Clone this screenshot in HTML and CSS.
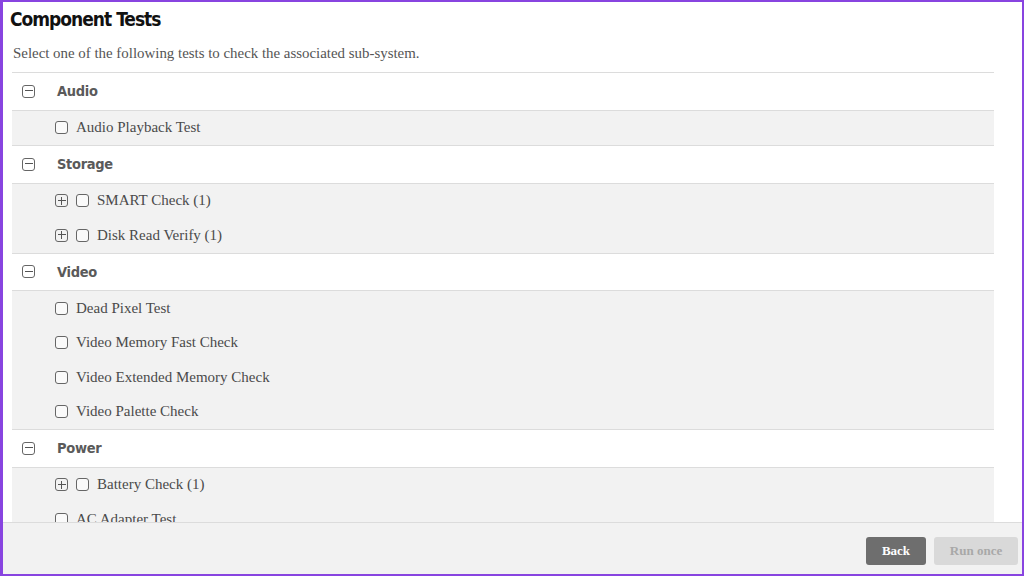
FILE: index.html
```html
<!DOCTYPE html>
<html>
<head>
<meta charset="utf-8">
<link rel="stylesheet" href="styles.css">
</head>
<body>
<div class="page">
  <div class="main">
    <h1 class="title">Component Tests</h1>
    <p class="intro">Select one of the following tests to check the associated sub-system.</p>
    <div class="list">
      <div class="cat">
        <div class="cat-head"><span class="toggle minus"></span><span class="cat-name">Audio</span></div>
        <div class="items">
          <div class="item"><span class="box"></span><span class="label">Audio Playback Test</span></div>
        </div>
      </div>
      <div class="cat">
        <div class="cat-head"><span class="toggle minus"></span><span class="cat-name">Storage</span></div>
        <div class="items">
          <div class="item"><span class="toggle plus small"></span><span class="box"></span><span class="label">SMART Check (1)</span></div>
          <div class="item"><span class="toggle plus small"></span><span class="box"></span><span class="label">Disk Read Verify (1)</span></div>
        </div>
      </div>
      <div class="cat">
        <div class="cat-head"><span class="toggle minus"></span><span class="cat-name">Video</span></div>
        <div class="items">
          <div class="item"><span class="box"></span><span class="label">Dead Pixel Test</span></div>
          <div class="item"><span class="box"></span><span class="label">Video Memory Fast Check</span></div>
          <div class="item"><span class="box"></span><span class="label">Video Extended Memory Check</span></div>
          <div class="item"><span class="box"></span><span class="label">Video Palette Check</span></div>
        </div>
      </div>
      <div class="cat">
        <div class="cat-head"><span class="toggle minus"></span><span class="cat-name">Power</span></div>
        <div class="items">
          <div class="item"><span class="toggle plus small"></span><span class="box"></span><span class="label">Battery Check (1)</span></div>
          <div class="item"><span class="box"></span><span class="label">AC Adapter Test</span></div>
        </div>
      </div>
    </div>
  </div>
  <div class="footer">
    <button class="btn btn-back">Back</button>
    <button class="btn btn-run" disabled>Run once</button>
  </div>
</div>
</body>
</html>
```
FILE: styles.css
```css
* { box-sizing: border-box; }
html, body { margin: 0; padding: 0; }
body { background: #fff; }
.page {
  width: 1024px;
  height: 576px;
  border: 2px solid #8844e0;
  border-left-width: 3px;
  display: flex;
  flex-direction: column;
  overflow: hidden;
  background: #fff;
}
.main {
  flex: 1;
  min-height: 0;
  overflow: hidden;
  padding: 0 28px 0 9px;
}
.title {
  margin: 3px 0 0 -2px;
  font-family: "DejaVu Sans Condensed", "DejaVu Sans", sans-serif;
  font-stretch: condensed;
  font-weight: bold;
  font-size: 19px;
  line-height: 28px;
  color: #111;
  letter-spacing: -1px;
}
.intro {
  margin: 11px 0 0 1px;
  font-family: "Liberation Serif", serif;
  font-size: 14.9px;
  line-height: 19px;
  color: #555;
}
.list {
  margin-top: 9px;
  border-top: 1px solid #dcdcdc;
}
.cat-head {
  height: 37.5px;
  display: flex;
  align-items: center;
  padding-left: 10px;
  background: #fff;
  border-bottom: 1px solid #dcdcdc;
}
.cat-name {
  margin-left: 22px;
  font-family: "DejaVu Sans Condensed", "DejaVu Sans", sans-serif;
  font-stretch: condensed;
  font-weight: bold;
  font-size: 14.5px;
  letter-spacing: -0.3px;
  color: #5a5a5a;
}
.items {
  background: #f2f2f2;
  border-bottom: 1px solid #dcdcdc;
}
.item {
  height: 34.5px;
  display: flex;
  align-items: center;
  padding-left: 43px;
}
.toggle {
  position: relative;
  width: 13px;
  height: 13px;
  border: 1.5px solid #666;
  border-radius: 3px;
  flex: none;
}
.toggle::before {
  content: "";
  position: absolute;
  left: 1.5px;
  right: 1.5px;
  top: 4.5px;
  height: 1px;
  background: #555;
}
.toggle.plus::after {
  content: "";
  position: absolute;
  top: 1.5px;
  bottom: 1.5px;
  left: 4.5px;
  width: 1px;
  background: #555;
}
.toggle.small { margin-right: 8px; }
.box {
  width: 13px;
  height: 13px;
  border: 1.5px solid #666;
  border-radius: 3px;
  flex: none;
  background: #fafafa;
}
.label {
  margin-left: 8px;
  font-family: "Liberation Serif", serif;
  font-size: 15px;
  color: #4a4a4a;
}
.footer {
  height: 52px;
  flex: none;
  background: #f2f2f2;
  border-top: 1px solid #dcdcdc;
  display: flex;
  justify-content: flex-end;
  align-items: flex-start;
  gap: 8px;
  padding: 14px 4px 0 0;
}
.btn {
  height: 28px;
  border: none;
  border-radius: 3px;
  font-family: "Liberation Serif", serif;
  font-weight: bold;
  font-size: 13px;
  padding: 0;
}
.btn-back {
  width: 60px;
  background: #6e6e6e;
  color: #fff;
}
.btn-run {
  width: 84px;
  background: #d9d9d9;
  color: #a8a8a8;
}
```
